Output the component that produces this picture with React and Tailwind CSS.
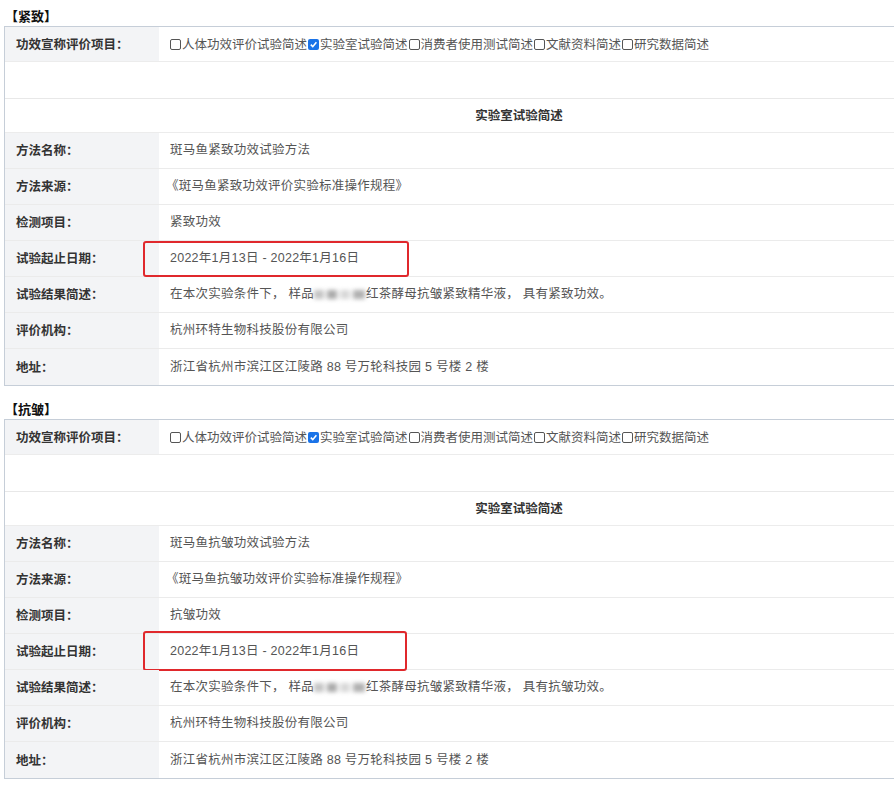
import React from "react";

const options = [
  { text: "人体功效评价试验简述", checked: false },
  { text: "实验室试验简述", checked: true },
  { text: "消费者使用测试简述", checked: false },
  { text: "文献资料简述", checked: false },
  { text: "研究数据简述", checked: false },
];

const valueFont = { fontFamily: '"Liberation Sans", "Noto Sans CJK SC", sans-serif' };

function Box({ checked }) {
  if (checked) {
    return (
      <span className="inline-flex w-[11px] h-[11px] mx-[1px] rounded-[2px] bg-[#1a73e8] items-center justify-center align-[-1px]">
        <svg width="9" height="9" viewBox="0 0 10 10">
          <path d="M2 5.2 L4.2 7.4 L8.2 2.6" fill="none" stroke="white" strokeWidth="1.8" />
        </svg>
      </span>
    );
  }
  return (
    <span className="inline-block w-[11px] h-[11px] mx-[1px] rounded-[2px] border border-[#555] bg-white align-[-1px]"></span>
  );
}

function Label({ children }) {
  return (
    <div className="w-[154px] shrink-0 bg-[#f3f4f6] flex items-center pl-[11px] font-bold text-[#333] text-[12.5px]">
      {children}
    </div>
  );
}

function Row({ label, children, box, last }) {
  return (
    <div className={"relative flex h-[36px] " + (last ? "" : "border-b border-[#ebebeb]")}>
      <Label>{label}</Label>
      <div
        className="flex-1 flex items-center pl-[11px] text-[#555] text-[12.5px] tracking-[0.25px] whitespace-pre"
        style={valueFont}
      >
        {children}
      </div>
      {box}
    </div>
  );
}

function Section({ title, effect, box, className }) {
  return (
    <div className={className}>
      <div className="h-[26px] pt-[8px] pl-[1px] text-[13px] leading-[16px] font-bold text-[#111]">
        【{title}】
      </div>
      <div className="w-[1030px] border border-[#c6ced8]">
        <div className="flex h-[35px] border-b border-[#ececec]">
          <Label>功效宣称评价项目：</Label>
          <div className="flex-1 flex items-center pl-[10px] text-[#555] text-[12.5px] whitespace-nowrap">
            {options.map((o) => (
              <span key={o.text} className="inline-flex items-center">
                <Box checked={o.checked} />
                {o.text}
              </span>
            ))}
          </div>
        </div>
        <div className="h-[37px] border-b border-[#e8e8e8] bg-white"></div>
        <div className="h-[34px] border-b border-[#ececec] flex items-center justify-center font-bold text-[12.5px] text-[#333]">
          实验室试验简述
        </div>
        <Row label="方法名称：">斑马鱼{effect}功效试验方法</Row>
        <Row label="方法来源：">
          <span className="-ml-[4px]">《斑马鱼{effect}功效评价实验标准操作规程》</span>
        </Row>
        <Row label="检测项目：">{effect}功效</Row>
        <Row label="试验起止日期：" box={box}>
          2022年1月13日 - 2022年1月16日
        </Row>
        <Row label="试验结果简述：">
          {"在本次实验条件下， 样品"}
          <span className="inline-flex w-[52px] gap-[3px] items-center blur-[2px]">
            <span className="w-[10px] h-[9px] bg-[#c4c4c4]"></span>
            <span className="w-[10px] h-[9px] bg-[#aaa]"></span>
            <span className="w-[10px] h-[9px] bg-[#d8d8d8]"></span>
            <span className="w-[12px] h-[9px] bg-[#b0b0b0]"></span>
          </span>
          {"红茶酵母抗皱紧致精华液， 具有" + effect + "功效。"}
        </Row>
        <Row label="评价机构：">杭州环特生物科技股份有限公司</Row>
        <Row label="地址：" last>
          浙江省杭州市滨江区江陵路 88 号万轮科技园 5 号楼 2 楼
        </Row>
      </div>
    </div>
  );
}

export default function App() {
  return (
    <div
      className="w-[894px] h-[792px] overflow-hidden bg-white pl-[4px]"
      style={{ fontFamily: '"Noto Sans CJK SC", "Noto Sans", sans-serif' }}
    >
      <Section
        title="紧致"
        effect="紧致"
        box={
          <div className="absolute left-[138px] top-0 w-[266px] h-[36px] border-2 border-[#e0282c] rounded-[3px]"></div>
        }
      />
      <Section
        title="抗皱"
        effect="抗皱"
        className="mt-[7px]"
        box={
          <div className="absolute left-[138px] top-[-3px] w-[264px] h-[40px] border-2 border-[#e0282c] rounded-[3px]"></div>
        }
      />
    </div>
  );
}
